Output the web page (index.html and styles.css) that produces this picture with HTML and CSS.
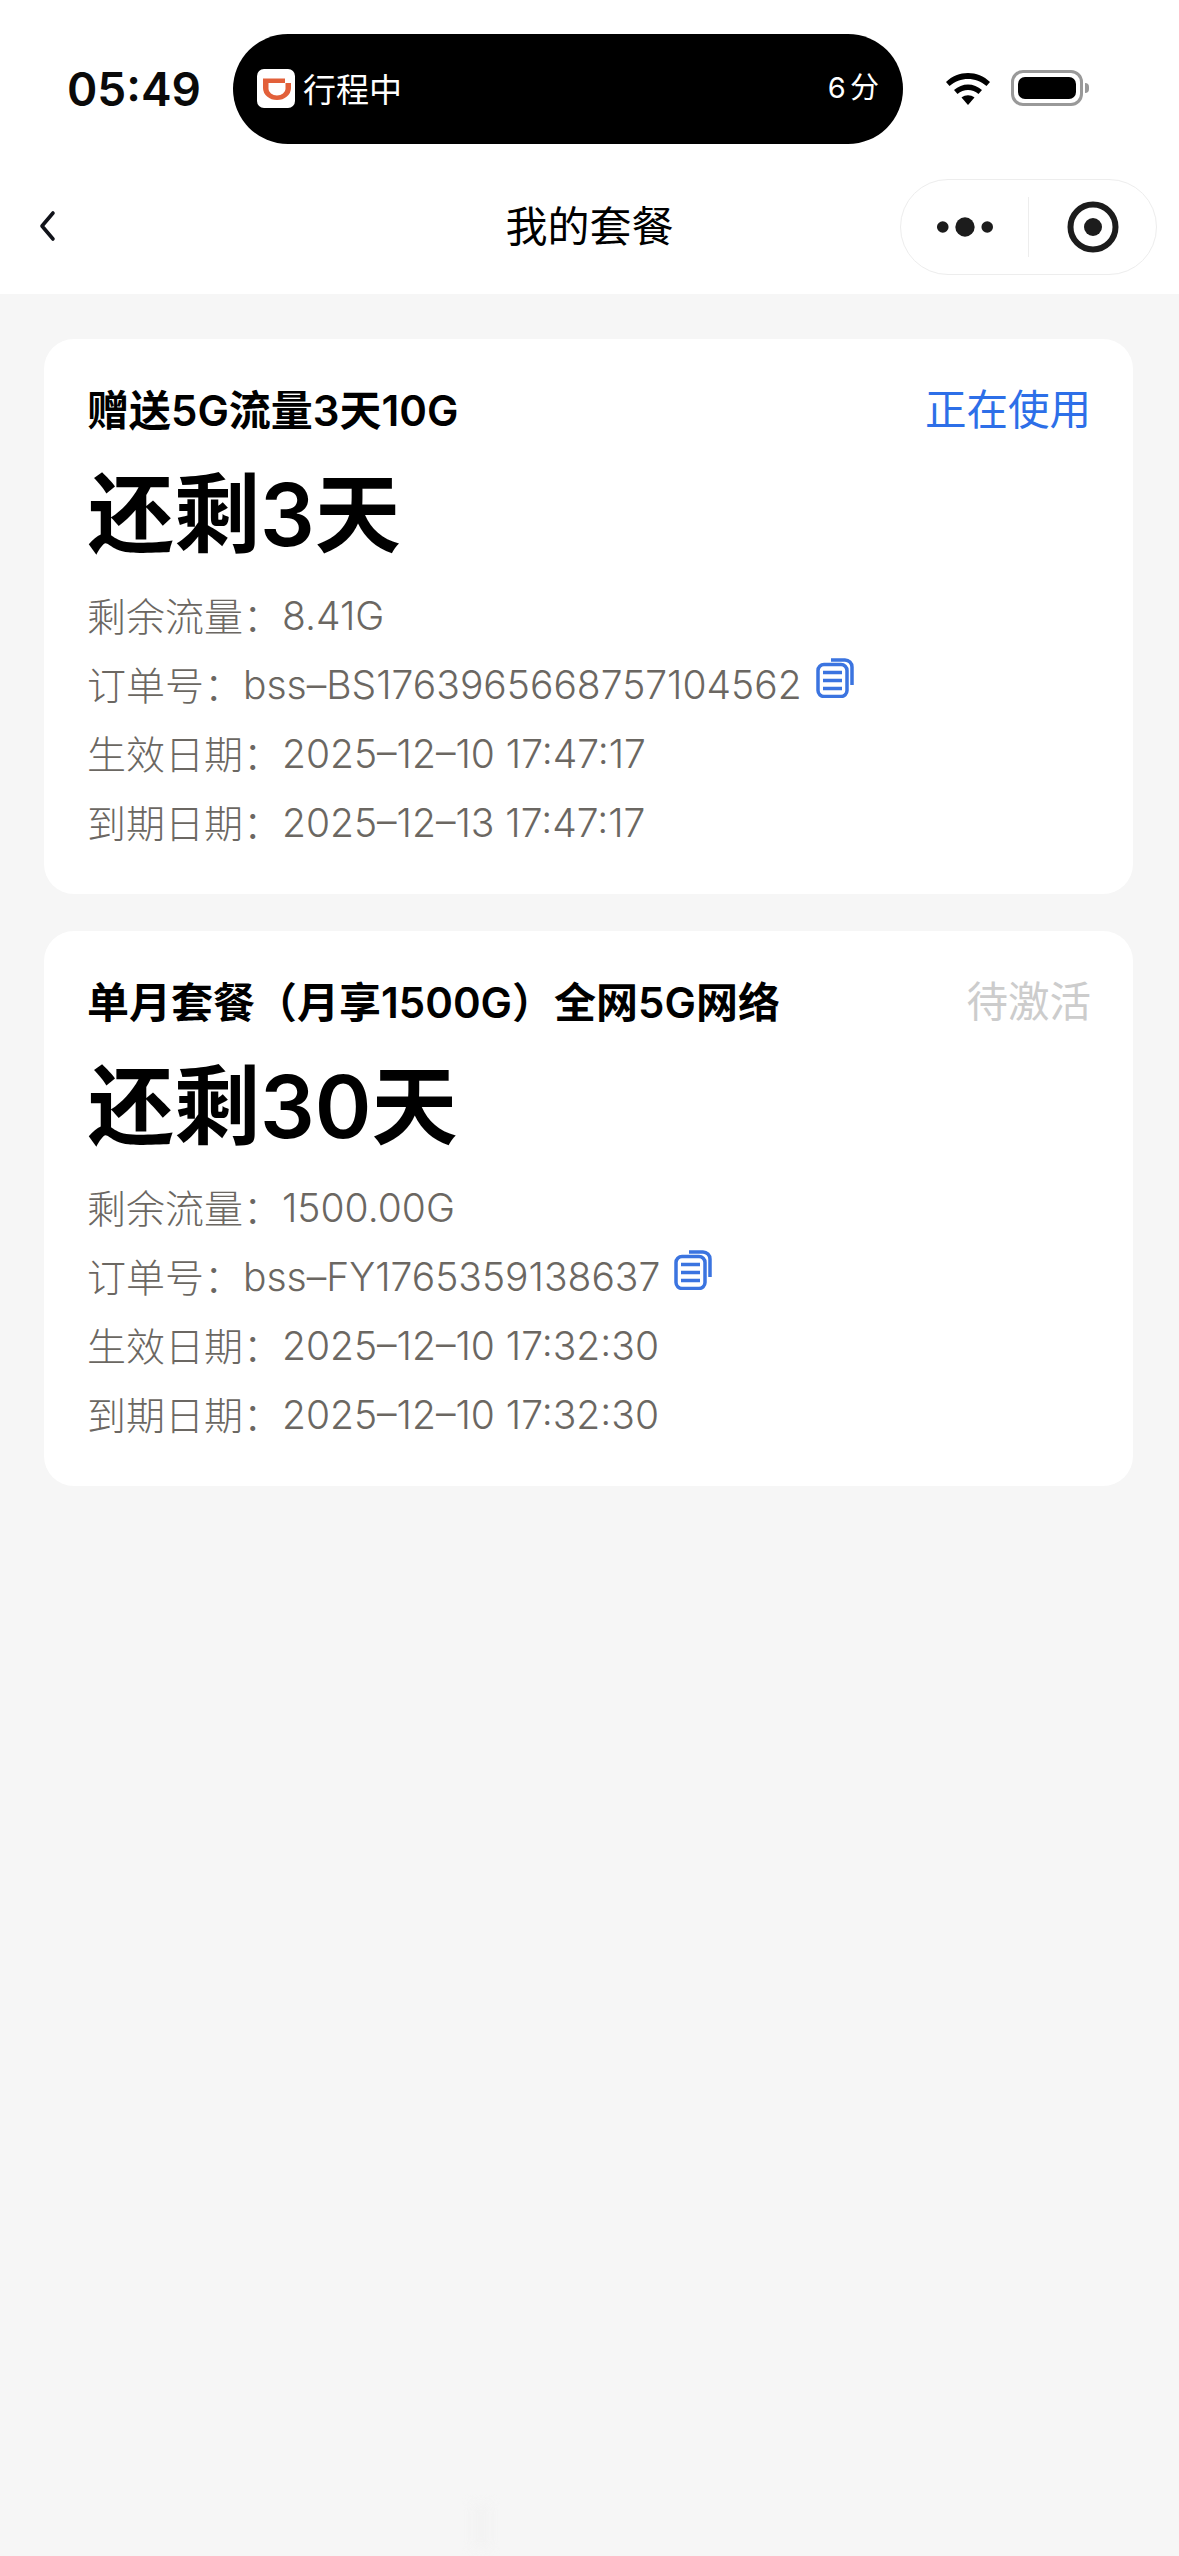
FILE: index.html
```html
<!DOCTYPE html>
<html lang="zh-Hans">
<head>
    <title>我的套餐</title>
    <link rel="stylesheet" href="styles.css">
</head>
<body>
    <header class="top">
        <div class="status-bar">
            <span class="time">05:49</span>
            <div class="island">
                <svg class="app-logo" viewBox="0 0 38 39">
                    <rect width="38" height="39" rx="7" fill="#fff"/>
                    <path d="M6 9.500H28V14H11.500V20a8.500 6.500 0 0 0 17 0V14H34V19a14 12 0 0 1-28 0z" fill="#e2603a"/>
                </svg>
                <span class="island-text">行程中</span>
                <span class="island-time">6 分</span>
            </div>
            <svg class="wifi" viewBox="0 0 46 34">
                <path d="M1 11C13-1 33-1 45 11l-3.500 4C31 5.500 15 5.500 4.500 15z" fill="#000"/>
                <path d="M9 19c8-7.500 20-7.500 28 0l-3.500 4c-6-5.500-15-5.500-21 0z" fill="#000"/>
                <path d="M16.500 26.500c4-3 9-3 13 0L23 34z" fill="#000"/>
            </svg>
            <div class="battery"><div class="battery-level"></div></div>
            <div class="battery-nub"></div>
        </div>
        <nav class="nav-bar">
            <svg class="back" viewBox="0 0 20 32">
                <path d="M15 3L4 16l11 13" fill="none" stroke="#11131a" stroke-width="3.600" stroke-linecap="round" stroke-linejoin="round"/>
            </svg>
            <h1 class="page-title">我的套餐</h1>
            <div class="capsule">
                <div class="capsule-btn">
                    <svg class="dots" viewBox="0 0 60 20">
                        <circle cx="7" cy="10" r="6" fill="#1c1c1c"/>
                        <circle cx="30" cy="10" r="10" fill="#1c1c1c"/>
                        <circle cx="53" cy="10" r="6" fill="#1c1c1c"/>
                    </svg>
                </div>
                <div class="capsule-line"></div>
                <div class="capsule-btn">
                    <svg class="target" viewBox="0 0 52 52">
                        <circle cx="26" cy="26" r="22.500" fill="none" stroke="#1c1c1c" stroke-width="6"/>
                        <circle cx="26" cy="26" r="9" fill="#1c1c1c"/>
                    </svg>
                </div>
            </div>
        </nav>
    </header>

    <main class="list">
        <section class="card">
            <div class="card-head">
                <span class="card-title">赠送5G流量3天10G</span>
                <span class="state state-active">正在使用</span>
            </div>
            <div class="remain">还剩3天</div>
            <p class="row">剩余流量&#xFF1A;<span>8.41G</span></p>
            <p class="row">订单号&#xFF1A;<span>bss–BS1763965668757104562</span>
                <svg class="copy" viewBox="0 0 38 40">
                    <rect x="2" y="6.500" width="29" height="32" rx="6" fill="none" stroke="#3b74e0" stroke-width="3.500"/>
                    <path d="M7 14.500h19M7 22.500h19M7 30.500h19" stroke="#3b74e0" stroke-width="3.500"/>
                    <path d="M15 2h14a7 7 0 0 1 7 7v18" fill="none" stroke="#3b74e0" stroke-width="3.500"/>
                </svg>
            </p>
            <p class="row">生效日期&#xFF1A;<span>2025–12–10 17:47:17</span></p>
            <p class="row">到期日期&#xFF1A;<span>2025–12–13 17:47:17</span></p>
        </section>

        <section class="card">
            <div class="card-head">
                <span class="card-title">单月套餐&#xFF08;月享1500G&#xFF09;全网5G网络</span>
                <span class="state state-wait">待激活</span>
            </div>
            <div class="remain">还剩30天</div>
            <p class="row">剩余流量&#xFF1A;<span>1500.00G</span></p>
            <p class="row">订单号&#xFF1A;<span>bss–FY1765359138637</span>
                <svg class="copy" viewBox="0 0 38 40">
                    <rect x="2" y="6.500" width="29" height="32" rx="6" fill="none" stroke="#3b74e0" stroke-width="3.500"/>
                    <path d="M7 14.500h19M7 22.500h19M7 30.500h19" stroke="#3b74e0" stroke-width="3.500"/>
                    <path d="M15 2h14a7 7 0 0 1 7 7v18" fill="none" stroke="#3b74e0" stroke-width="3.500"/>
                </svg>
            </p>
            <p class="row">生效日期&#xFF1A;<span>2025–12–10 17:32:30</span></p>
            <p class="row">到期日期&#xFF1A;<span>2025–12–10 17:32:30</span></p>
        </section>
    </main>

    <div class="home-mark"></div>
</body>
</html>
```

FILE: styles.css
```css
* {
    box-sizing: border-box;
}

html,
body {
    height: 100%;
}

body {
    margin: 0;
    display: flex;
    flex-direction: column;
    overflow: hidden;
    background-color: #f6f6f6;
    color: #000;
    font-family: "Inter", "Noto Sans CJK SC", sans-serif;
}

.top {
    height: 294px;
    background-color: #fff;
}

.status-bar {
    display: flex;
    align-items: center;
    height: 144px;
    padding: 33px 0 0 67px;
}

.time {
    width: 166px;
    font-size: 46px;
    font-weight: 600;
    color: #0a0a0a;
}

.island {
    display: flex;
    align-items: center;
    width: 670px;
    height: 110px;
    padding: 0 24px;
    background-color: #000;
    border-radius: 55px;
    color: #fff;
}

.app-logo {
    width: 38px;
    height: 39px;
}

.island-text {
    margin: -2px 0 0 8px;
    font-size: 33px;
}

.island-time {
    margin: -7px 0 0 auto;
    font-size: 29px;
    word-spacing: -4px;
}

.wifi {
    width: 46px;
    height: 34px;
    margin: -2px 20px 0 42px;
}

.battery {
    width: 72px;
    height: 36px;
    margin-top: -2px;
    padding: 4px;
    border: 3px solid #999;
    border-radius: 12px;
}

.battery-level {
    height: 100%;
    background-color: #000;
    border-radius: 7px;
}

.battery-nub {
    width: 4px;
    height: 10px;
    margin: -2px 0 0 2px;
    background-color: #999;
    border-radius: 0 4px 4px 0;
}

.nav-bar {
    position: relative;
    display: flex;
    align-items: center;
    height: 150px;
    padding: 0 58px 0 38px;
}

.back {
    width: 20px;
    height: 32px;
    margin-top: 14px;
}

.page-title {
    flex: 1;
    margin: 9px 0 0;
    font-size: 42px;
    font-weight: 400;
    text-align: center;
}

.capsule {
    position: absolute;
    top: 35px;
    right: 22px;
    display: flex;
    align-items: center;
    width: 257px;
    height: 96px;
    background-color: #fff;
    border: 1px solid #ededed;
    border-radius: 48px;
}

.capsule-btn {
    flex: 1;
    display: flex;
    justify-content: center;
    align-items: center;
}

.capsule-line {
    width: 1px;
    height: 60px;
    background-color: #ededed;
}

.dots {
    width: 58px;
    height: 20px;
}

.target {
    width: 52px;
    height: 52px;
}

.list {
    display: flex;
    flex-direction: column;
    gap: 37px;
    padding: 45px 46px 0 44px;
}

.card {
    height: 555px;
    padding: 40px 42px 0 43px;
    background-color: #fff;
    border-radius: 30px;
}

.card-head {
    display: flex;
    justify-content: space-between;
    align-items: center;
    height: 56px;
}

.card-title {
    font-size: 42px;
    font-weight: 600;
}

.state {
    font-size: 41.500px;
}

.state-active {
    color: #2d6fe8;
}

.state-wait {
    color: #cccccc;
}

.remain {
    height: 120px;
    margin-top: 24px;
    padding-left: 1px;
    font-size: 86px;
    font-weight: 600;
    line-height: 112px;
}

.row {
    display: flex;
    align-items: center;
    height: 69px;
    margin: 0;
    font-size: 39px;
    font-weight: 300;
    color: #6b6762;
}

.row span {
    margin-top: 4px;
}

.copy {
    width: 38px;
    height: 40px;
    margin: -10px 0 0 14px;
}

.home-mark {
    width: 20px;
    height: 44px;
    margin: auto 0 8px 471px;
    background-color: #f3f3f3;
    border-radius: 4px;
    filter: blur(5px);
}
```
